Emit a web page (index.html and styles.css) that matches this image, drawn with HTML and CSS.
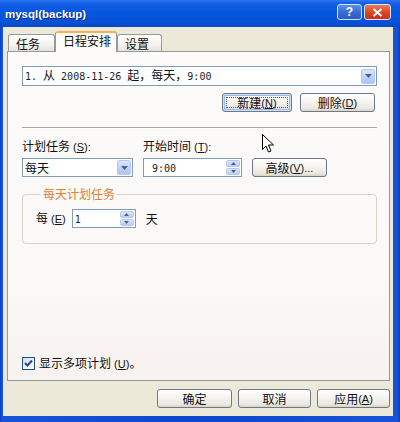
FILE: index.html
```html
<!DOCTYPE html>
<html>
<head>
<meta charset="utf-8">
<title>mysql(backup)</title>
<link rel="stylesheet" href="styles.css">
</head>
<body>
<div class="window">
  <div class="titlebar">
    <span class="title">mysql(backup)</span>
    <div class="tbtns">
      <span class="tbtn help">?</span>
      <span class="tbtn close"><svg width="11" height="9" viewBox="0 0 11 9"><path d="M1.5 1 L9.5 8 M9.5 1 L1.5 8" stroke="#fff" stroke-width="2" fill="none"/></svg></span>
    </div>
  </div>
  <div class="client">
    <div class="tabs">
      <div class="tab t1">任务</div>
      <div class="tab t2 active">日程安排</div>
      <div class="tab t3">设置</div>
    </div>
    <div class="panel">
      <div class="combo wide">
        <span class="ctext"><span class="mo">1. </span>从<span class="mo"> 2008-11-26 </span>起，每天，<span class="mo">9:00</span></span>
        <span class="drop"><svg width="7" height="4" viewBox="0 0 7 4"><path d="M0 0 H7 L3.5 4 Z" fill="#4d6185"/></svg></span>
      </div>
      <div class="btnrow">
        <button class="btn focus b-new"><span class="focusring">新建<span class="lt"> (<u>N</u>)</span></span></button>
        <button class="btn b-del">删除<span class="lt"> (<u>D</u>)</span></button>
      </div>
      <div class="sep"></div>
      <div class="grid">
        <span class="lbl">计划任务<span class="lt"> (<u>S</u>):</span></span>
        <span class="lbl">开始时间<span class="lt"> (<u>T</u>):</span></span>
        <span></span>
        <div class="combo">
          <span class="ctext">每天</span>
          <span class="drop"><svg width="7" height="4" viewBox="0 0 7 4"><path d="M0 0 H7 L3.5 4 Z" fill="#4d6185"/></svg></span>
        </div>
        <div class="spinbox">
          <span class="ctext sp-time"><span class="mo">9:00</span></span>
          <span class="spin">
            <span class="sbtn"><svg width="5" height="3" viewBox="0 0 5 3"><path d="M0 3 H5 L2.5 0 Z" fill="#4d6185"/></svg></span>
            <span class="sbtn"><svg width="5" height="3" viewBox="0 0 5 3"><path d="M0 0 H5 L2.5 3 Z" fill="#4d6185"/></svg></span>
          </span>
        </div>
        <button class="btn b-adv">高级<span class="lt"> (<u>V</u>)...</span></button>
      </div>
      <fieldset class="group">
        <legend>每天计划任务</legend>
        <div class="grow">
          <span>每<span class="lt"> (<u>E</u>)</span></span>
          <div class="spinbox num">
            <span class="ctext"><span class="mo">1</span></span>
            <span class="spin">
              <span class="sbtn"><svg width="5" height="3" viewBox="0 0 5 3"><path d="M0 3 H5 L2.5 0 Z" fill="#4d6185"/></svg></span>
              <span class="sbtn"><svg width="5" height="3" viewBox="0 0 5 3"><path d="M0 0 H5 L2.5 3 Z" fill="#4d6185"/></svg></span>
            </span>
          </div>
          <span class="unit">天</span>
        </div>
      </fieldset>
      <div class="check">
        <span class="cbox"><svg width="11" height="11" viewBox="0 0 11 11"><path d="M2 5 L4.5 7.5 L9 2.5" stroke="#22449e" stroke-width="2" fill="none"/></svg></span>
        <span>显示多项计划<span class="lt"> (<u>U</u>)</span>。</span>
      </div>
      <svg class="cursor" width="13" height="20" viewBox="0 0 13 20"><path d="M0.5 0.5 L0.5 15.5 L4 12 L6.5 18 L9 17 L6.5 11 L11.5 11 Z" fill="#fff" stroke="#000" stroke-width="1"/></svg>
    </div>
    <div class="footer">
      <button class="btn b-ok">确定</button>
      <button class="btn b-cancel">取消</button>
      <button class="btn b-apply">应用<span class="lt"> (<u>A</u>)</span></button>
    </div>
  </div>
</div>
</body>
</html>
```
FILE: styles.css
```css
* { box-sizing: border-box; }
html, body { margin: 0; padding: 0; }
body {
  font: 12px/14px "Noto Sans CJK SC", sans-serif;
  color: #111;
  background: #0b46cf;
}
.window {
  width: 400px;
  height: 422px;
  display: flex;
  flex-direction: column;
  background: linear-gradient(90deg, #0a3dc4, #1654d8 2px, #0b46cf 50%, #1654d8 calc(100% - 3px), #0a3dc4);
}
.titlebar {
  height: 27px;
  flex: none;
  display: flex;
  align-items: center;
  justify-content: space-between;
  padding: 0 9px 0 5px;
  background: linear-gradient(#2f79ee 0%, #1260e6 12%, #0757de 45%, #0552d8 80%, #0847c4 100%);
}
.title {
  color: #fff;
  font: bold 11.5px/14px "Liberation Sans", sans-serif;
  text-shadow: 1px 1px 0 #0a2a8a;
}
.tbtns {
  display: flex;
  gap: 2px;
  align-self: flex-start;
  margin-top: 4px;
}
.tbtn {
  height: 16px;
  border: 1px solid #d8e2f8;
  border-radius: 3px;
  display: flex;
  align-items: center;
  justify-content: center;
  color: #fff;
  font: bold 12px/1 "Liberation Sans", sans-serif;
}
.help {
  width: 25px;
  background: linear-gradient(#5a8ee8, #3468d2 60%, #2a5cc4);
}
.close {
  width: 27px;
  background: linear-gradient(#ec7a58, #dc4424 55%, #c8301a);
}
.client {
  flex: 1;
  margin: 0 7px 6px 3px;
  background: #ece9d8;
  display: flex;
  flex-direction: column;
  padding: 4px 3px 0 4px;
}
.tabs {
  display: flex;
  align-items: flex-end;
  height: 21px;
  padding-left: 1px;
  margin-bottom: -1px;
  position: relative;
  z-index: 1;
}
.tab {
  height: 17px;
  margin-bottom: 1px;
  border: 1px solid #919b9c;
  border-bottom: 0;
  border-radius: 3px 3px 0 0;
  background: linear-gradient(#ffffff, #f4f3ee 60%, #e5e3dc);
  padding: 2px 0 0 7px;
}
.t1 { width: 47px; }
.t2 { width: 62px; }
.t3 { width: 45px; }
.tab.active {
  height: 21px;
  margin-bottom: 0;
  border-top: 2px solid #f3b44e;
  background: #fcfbf9;
  padding: 1px 0 0 7px;
}
.panel {
  flex: 1;
  position: relative;
  border: 1px solid #919b9c;
  background: linear-gradient(#fcfbfa, #fbf8f6 70%, #f7f2ef);
  display: flex;
  flex-direction: column;
  padding: 14px 12px 10px 14px;
}
.lt {
  font: 11px/14px "Liberation Sans", sans-serif;
}
.mo {
  font: 10px/14px "DejaVu Sans Mono", monospace;
  white-space: pre;
  color: #222;
}
.combo {
  height: 19px;
  border: 1px solid #7f9db9;
  background: #fff;
  display: flex;
  align-items: center;
  justify-content: space-between;
  padding: 0 1px 0 2px;
}
.combo.wide {
  height: 20px;
}
.ctext {
  white-space: nowrap;
}
.drop {
  width: 14px;
  height: 15px;
  border: 1px solid #b5c8f2;
  border-radius: 2px;
  background: linear-gradient(#dbe6fd, #bccff9 60%, #aec4f3);
  display: flex;
  align-items: center;
  justify-content: center;
}
.btnrow {
  display: flex;
  justify-content: flex-end;
  gap: 8px;
  margin-top: 7px;
  padding-right: 2px;
}
.btn {
  height: 19px;
  border: 1px solid #6d7888;
  border-radius: 3px;
  background: linear-gradient(#ffffff, #f5f4f0 45%, #e9e7df 85%, #d8d3c8);
  font: 12px/14px "Noto Sans CJK SC", sans-serif;
  color: #111;
  padding: 0;
  display: flex;
  align-items: center;
  justify-content: center;
}
.btn.focus {
  box-shadow: inset 0 0 0 1px #cfe0fb, inset 0 0 0 2px #9ab9ec;
}
.focusring {
  width: calc(100% - 6px);
  height: calc(100% - 6px);
  border: 1px dotted #555;
  display: flex;
  align-items: center;
  justify-content: center;
}
.b-new { width: 70px; }
.b-del { width: 75px; }
.b-adv { width: 75px; }
.b-ok { width: 75px; }
.b-cancel { width: 73px; }
.b-apply { width: 73px; }
.sep {
  margin-top: 15px;
  height: 2px;
  border-top: 1px solid #aca899;
  border-bottom: 1px solid #ffffff;
}
.grid {
  display: grid;
  grid-template-columns: 111px 99px 75px;
  column-gap: 10px;
  row-gap: 4px;
  margin-top: 10px;
}
.lbl {
  white-space: nowrap;
}
.spinbox {
  height: 19px;
  border: 1px solid #7f9db9;
  background: #fff;
  display: flex;
  align-items: center;
  justify-content: space-between;
  padding: 0 1px 0 2px;
}
.sp-time {
  padding-left: 6px;
}
.spin {
  display: flex;
  flex-direction: column;
  gap: 1px;
}
.sbtn {
  width: 14px;
  height: 7px;
  border: 1px solid #b5c8f2;
  border-radius: 2px;
  background: linear-gradient(#dbe6fd, #b9cdf8);
  display: flex;
  align-items: center;
  justify-content: center;
}
.group {
  margin: 10px 0 0 0;
  padding: 8px 0 15px 13px;
  border: 1px solid #d5d3c8;
  border-radius: 4px;
  min-width: 0;
}
.group legend {
  color: #e2802c;
  padding: 0 2px;
  margin-left: 5px;
  line-height: 14px;
}
.grow {
  display: flex;
  align-items: center;
  gap: 6px;
}
.spinbox.num {
  width: 64px;
}
.unit {
  margin-left: 4px;
}
.check {
  margin-top: auto;
  display: flex;
  align-items: center;
  gap: 4px;
  height: 13px;
}
.cbox {
  width: 13px;
  height: 13px;
  border: 1px solid #1c5180;
  background: linear-gradient(135deg, #dcdcd7, #ffffff);
  display: flex;
  align-items: center;
  justify-content: center;
}
.cursor {
  position: absolute;
  left: 254px;
  top: 82px;
}
.footer {
  flex: none;
  height: 35px;
  display: flex;
  justify-content: flex-end;
  gap: 6px;
  padding-top: 8px;
}
```
